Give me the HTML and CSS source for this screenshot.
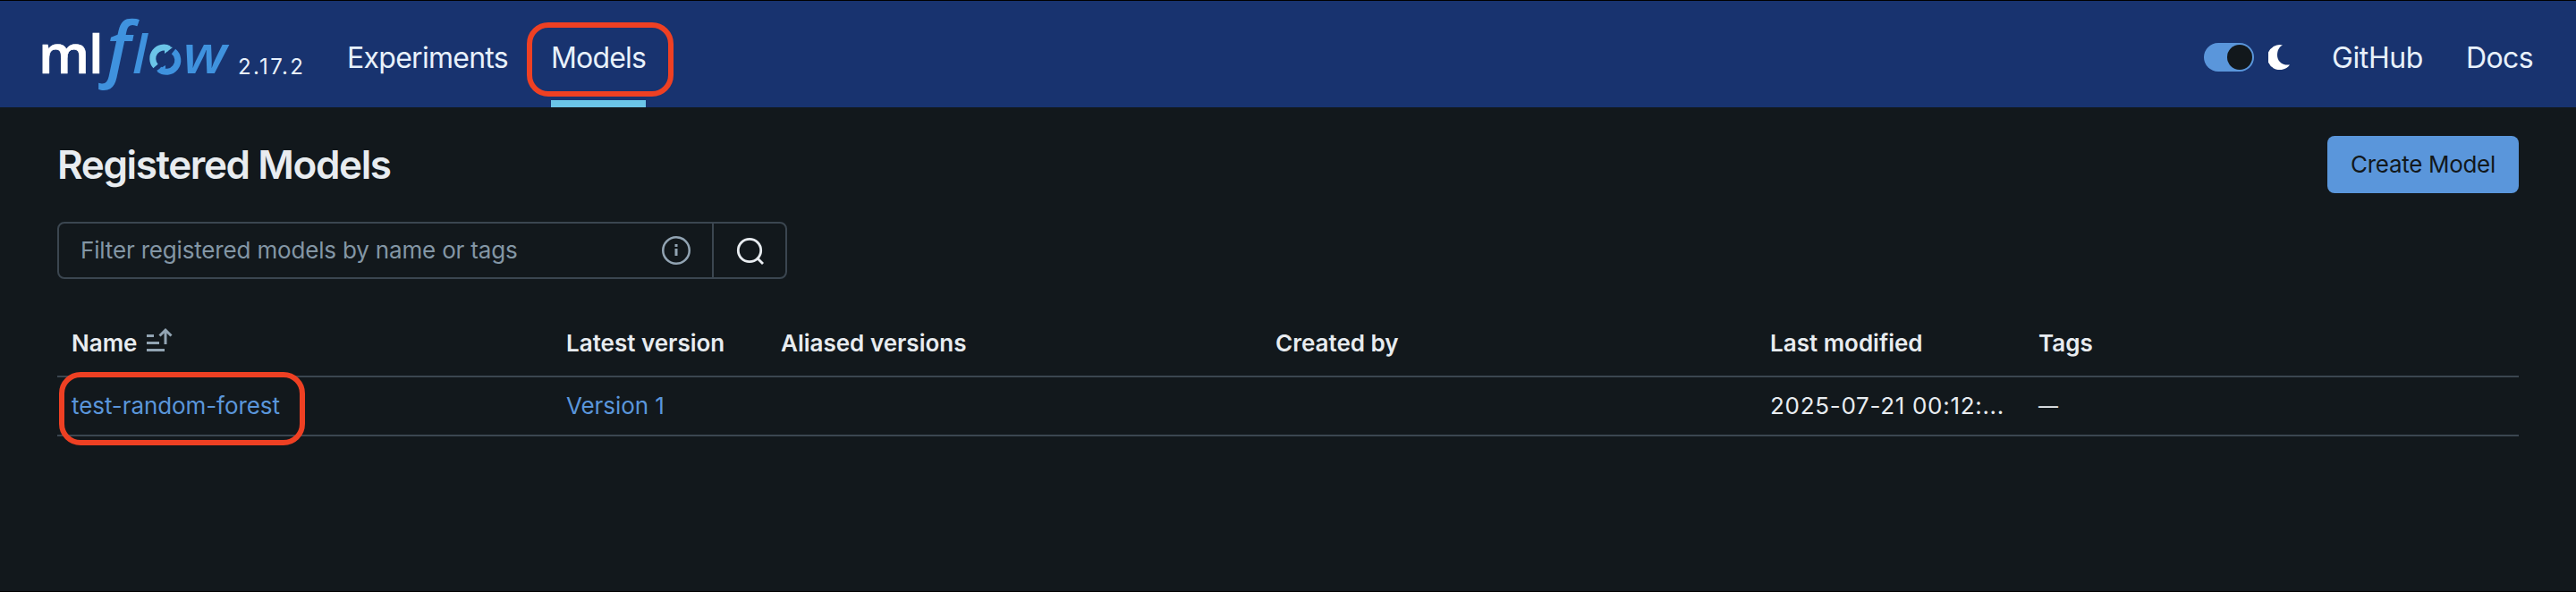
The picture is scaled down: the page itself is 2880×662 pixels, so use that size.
FILE: index.html
```html
<!DOCTYPE html>
<html lang="en">
<head>
<meta charset="utf-8">
<title>MLflow</title>
<link rel="stylesheet" href="styles.css">
</head>
<body>
<header class="topbar">
  <svg class="logo" width="216" height="90" viewBox="0 0 216 90" role="img" aria-label="mlflow">
    <text class="logo-ml" x="-4" y="66">m</text>
    <text class="logo-ml" x="52" y="66">l</text>
    <text class="logo-f" x="72" y="65.500">f</text>
    <text class="logo-flow" x="101" y="66">l</text>
    <g fill="none" stroke-width="7">
      <path stroke="#6bc5e8" d="M127 58A12.500 12.500 0 0 1 142 38.500"/>
      <path stroke="#3f92de" d="M147 41.500A12.500 12.500 0 0 1 131 61.500"/>
    </g>
    <path fill="#6bc5e8" d="M137 34.500L146 37L137 44V41Z"/>
    <path fill="#3f92de" d="M128 63L138 57V60L134 66Z"/>
    <text class="logo-flow" x="157.500" y="66" textLength="49" lengthAdjust="spacingAndGlyphs">w</text>
  </svg>
  <span class="version">2.17.2</span>
  <nav class="nav">
    <a class="nav-link nav-exp">Experiments</a>
    <a class="nav-link nav-active">Models<span class="mark mark-nav"></span></a>
  </nav>
  <div class="tools">
    <span class="switch"><span class="knob"></span></span>
    <svg class="moon" width="24" height="28" viewBox="0 0 24 28"><path fill="#fff" d="M16 .5A14 14 0 1 0 24 22.500C15 23.500 10 18 10 11.500C10 6.500 12 2.500 16 .5Z"/></svg>
    <a class="nav-link gh">GitHub</a>
    <a class="nav-link docs">Docs</a>
  </div>
</header>
<main class="page">
  <div class="title-row">
    <h1 class="title">Registered Models</h1>
    <button class="create">Create Model</button>
  </div>
  <div class="search">
    <div class="search-input"><span>Filter registered models by name or tags</span>
      <svg width="32" height="32" viewBox="0 0 32 32"><circle cx="16" cy="16" r="14.750" fill="none" stroke="#92a4b3" stroke-width="2.500"/><path fill="#92a4b3" d="M14.500 14h3v8h-3zM14.500 9h3v3h-3z"/></svg>
    </div>
    <div class="search-button">
      <svg width="32" height="32" viewBox="0 0 32 32" fill="none" stroke="#e8ecf0" stroke-width="2.800"><circle cx="16" cy="16" r="12.700"/><path d="M25 25l6 6"/></svg>
    </div>
  </div>
  <div class="table">
    <div class="row head">
      <div class="cell">Name
        <svg class="sort" width="30" height="28" viewBox="0 0 30 28"><path fill="#92a4b3" d="M0 8h8v3H0zM0 16h14v3H0zM0 24h20v3H0z"/><path fill="none" stroke="#92a4b3" stroke-width="3" d="M21 19V3M14.500 9.500L21 3l6.500 6.500"/></svg>
      </div>
      <div class="cell">Latest version</div>
      <div class="cell">Aliased versions</div>
      <div class="cell">Created by</div>
      <div class="cell">Last modified</div>
      <div class="cell">Tags</div>
    </div>
    <div class="row">
      <div class="cell link">test-random-forest<span class="mark mark-name"></span></div>
      <div class="cell link">Version 1</div>
      <div class="cell"></div>
      <div class="cell"></div>
      <div class="cell date">2025-07-21 00:12:...</div>
      <div class="cell dash">—</div>
    </div>
  </div>
</main>
</body>
</html>
```
FILE: styles.css
```css
* { box-sizing: border-box; }
body { margin: 0; height: 662px; border-bottom: 1px solid #000; background: #12181c; color: #e8ecf0; font: 26px/40px Inter, "Liberation Sans", sans-serif; }
.topbar { display: flex; height: 120px; border-top: 1px solid #000; background: #18336f; padding: 0 48px 0 47px; }
.logo { margin-top: 15px; flex: none; overflow: visible; }
.logo-ml, .logo-flow { font: 600 60px "Open Sans", sans-serif; fill: #fff; }
.logo-ml { stroke: #fff; stroke-width: .6px; }
.logo-flow { font-style: italic; fill: #3f92de; }
.logo-f { font: italic 600 80px "Open Sans", sans-serif; fill: #3f92de; }
.version { margin: 54px 0 0 3px; width: 75px; font-size: 24px; letter-spacing: 2.3px; color: #e8f1fb; white-space: nowrap; }
.nav { display: flex; gap: 48px; margin-left: 47px; }
.nav-link { position: relative; font-size: 32px; line-height: 128px; height: 119px; color: #e8f1fb; }
.nav-exp { width: 180px; letter-spacing: -.72px; }
.nav-active { width: 106px; letter-spacing: -.83px; border-bottom: 8px solid #6bc5e8; }
.mark { position: absolute; border: 6px solid #ee4023; border-radius: 24px; }
.mark-nav { left: -27px; top: 24px; width: 164px; height: 83px; }
.mark-name { left: 2px; top: -6px; width: 275px; height: 82px; }
.tools { display: flex; margin-left: auto; }
.switch { width: 56px; height: 32px; margin-top: 47px; border-radius: 16px; background: #5a96db; padding: 2px; display: flex; justify-content: flex-end; }
.knob { width: 28px; height: 28px; border-radius: 50%; background: #12181c; }
.moon { margin: 49px 47px 0 16px; }
.gh { width: 102px; margin-right: 48px; letter-spacing: -.4px; }
.docs { width: 75px; letter-spacing: -.6px; }
.page { padding: 32px 64px 0; }
.title-row { display: flex; justify-content: space-between; height: 64px; }
.title { margin: 0; font-size: 44px; line-height: 64px; font-weight: 600; letter-spacing: -1.38px; }
.create { width: 214px; border: 0; border-radius: 8px; background: #5a96db; color: #12181c; font: inherit; letter-spacing: -.3px; padding: 0; }
.search { display: flex; width: 816px; height: 64px; margin-top: 32px; border: 2px solid #3b4650; border-radius: 8px; }
.search-input { flex: 1; display: flex; align-items: center; justify-content: space-between; padding: 0 24px; color: #8396a5; letter-spacing: -.17px; }
.search-button { width: 82px; border-left: 2px solid #3b4650; display: flex; align-items: center; justify-content: center; }
.table { margin-top: 32px; }
.row { display: grid; grid-template-columns: 553px 240px 553px 553px 300px 553px; height: 66px; border-bottom: 2px solid #3b4650; }
.head { height: 78px; font-weight: 600; padding-top: 3px; }
.cell { position: relative; display: flex; align-items: center; padding: 0 16px; white-space: nowrap; }
.sort { margin: -7px 0 0 10.500px; }
.link { color: #5a96db; letter-spacing: -.08px; }
.date { letter-spacing: .7px; }
.dash { font-size: 22px; }
```
